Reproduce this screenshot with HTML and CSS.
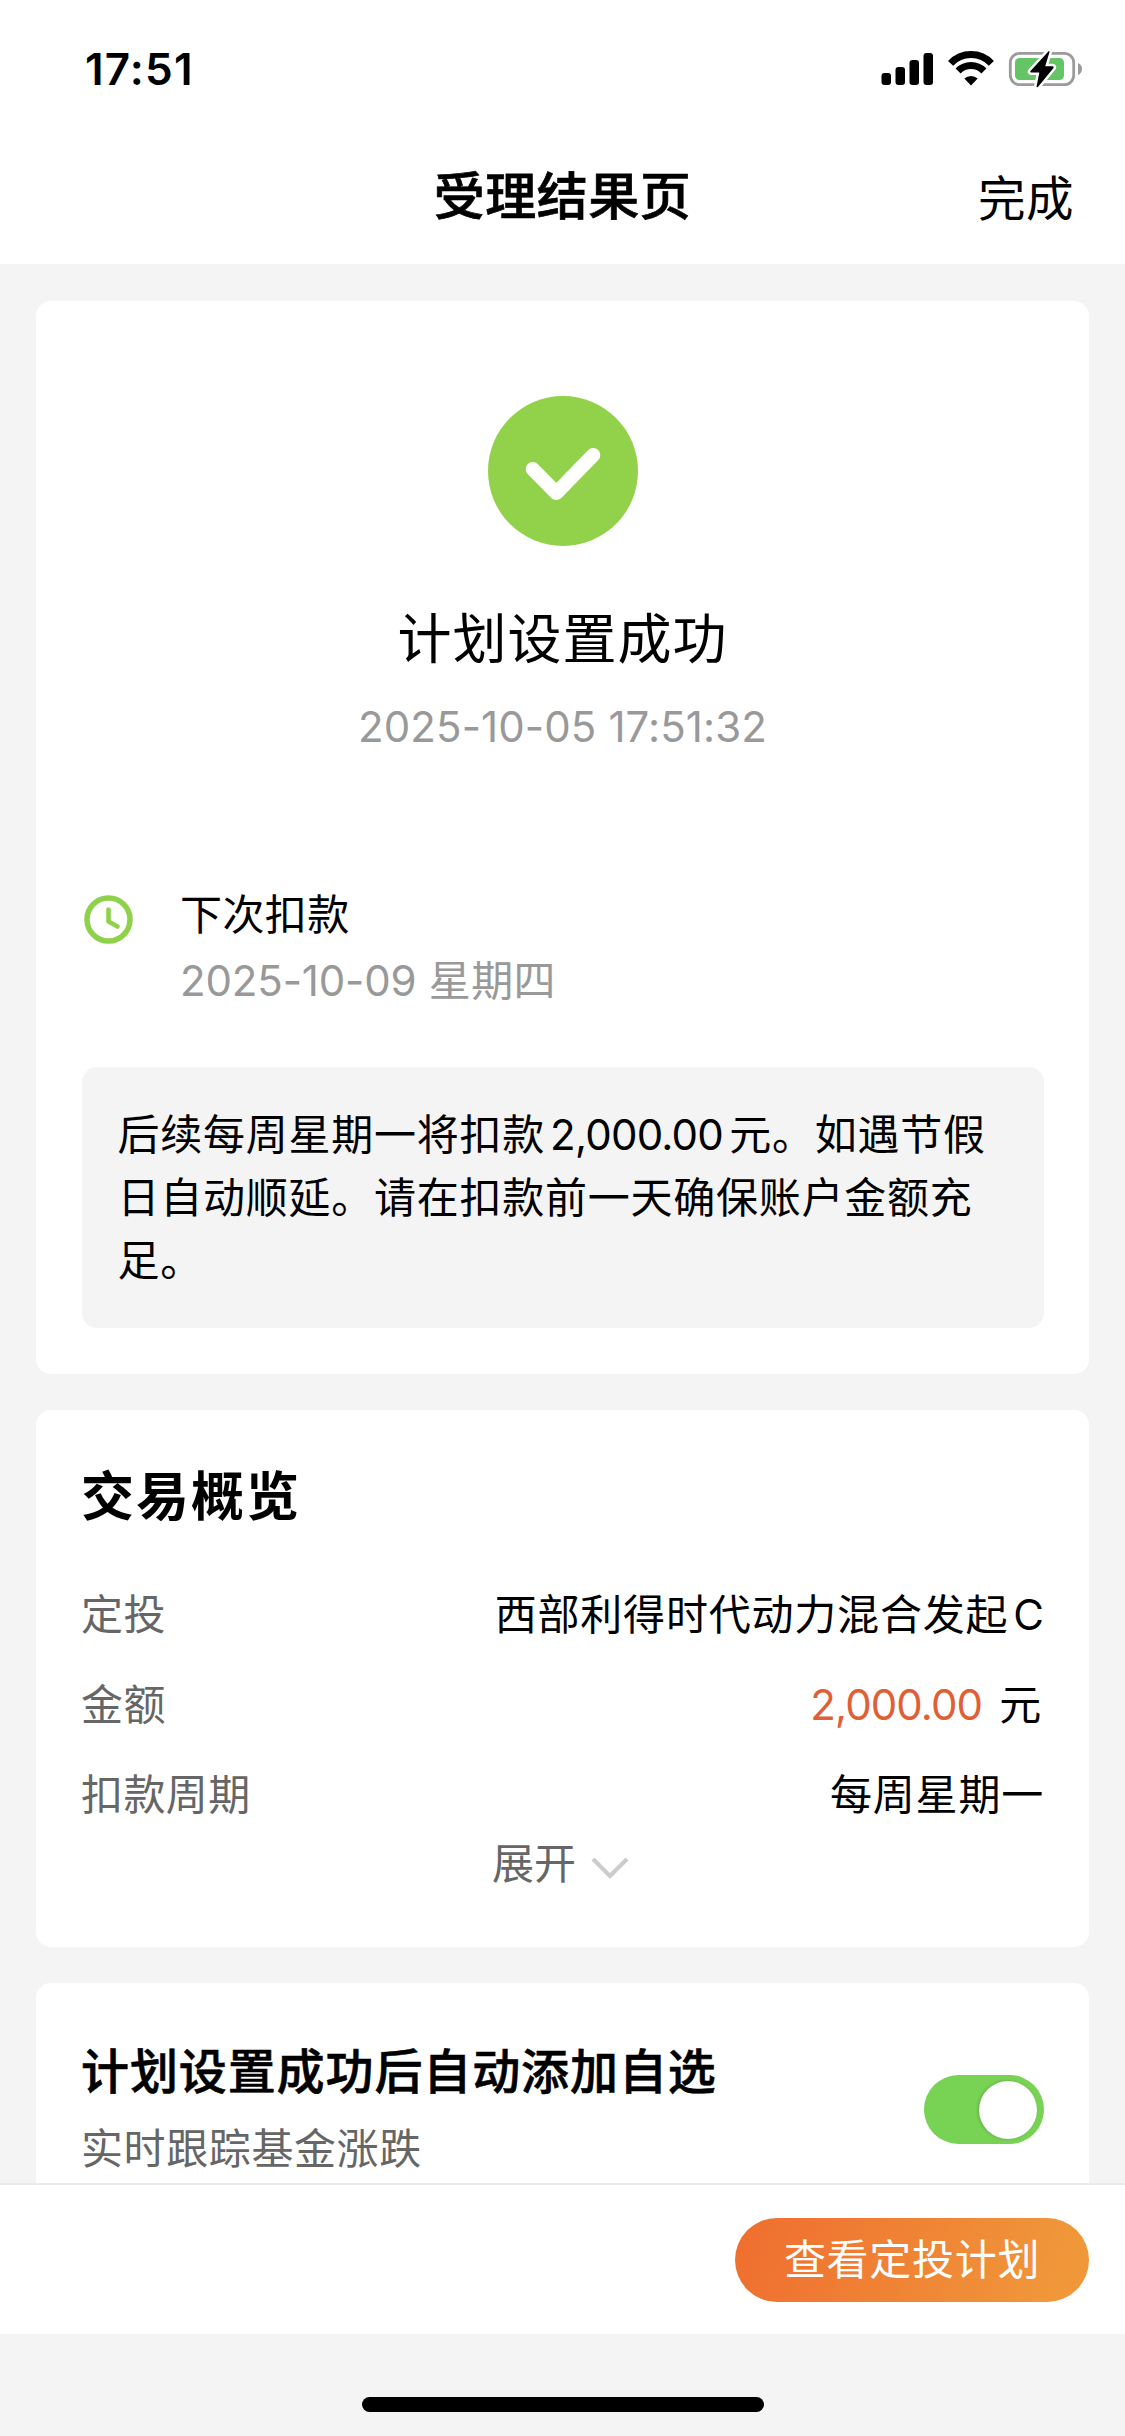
FILE: index.html
```html
<!DOCTYPE html>
<html lang="zh-CN">
<head>
<meta charset="utf-8">
<title>受理结果页</title>
<link rel="stylesheet" href="styles.css">
</head>
<body>
<div class="screen">
  <header class="top">
    <div class="status">
      <span class="time">17:51</span>
      <svg class="status-icons" width="204" height="40" viewBox="0 0 204 40">
        <g fill="#000">
          <rect x="1.5" y="23" width="9.5" height="12" rx="3"/>
          <rect x="15.5" y="17" width="9.5" height="18" rx="3"/>
          <rect x="29.5" y="10" width="9.5" height="25" rx="3"/>
          <rect x="43.5" y="3" width="9.5" height="32" rx="3"/>
        </g>
        <g fill="none" stroke="#000" stroke-width="7">
          <path d="M70.600 13.300A28 28 0 0 1 111.400 13.300"/>
          <path d="M78.100 21A18 18 0 0 1 103.900 21"/>
        </g>
        <path d="M91 35.500L84.300 28.500A10 10 0 0 1 97.700 28.500Z" fill="#000"/>
        <rect x="130.300" y="3.300" width="63.400" height="31.400" rx="9.500" fill="#fff" stroke="#9b9b9b" stroke-width="2.800"/>
        <rect x="135" y="8" width="49" height="22" rx="4.500" fill="#65c466"/>
        <path d="M198 13q4 1.800 4 6t-4 6z" fill="#9b9b9b"/>
        <path d="M168.600 1.300L150.500 20.900Q149.500 22.300 151.300 22.400H159.300L156.500 36.800Q157 37.900 158.300 36.400L173.500 18Q174.300 16.300 172.500 16.300H165.200L169.500 2Q169.500 .6 168.600 1.300Z" fill="#000" stroke="#fff" stroke-width="5" stroke-linejoin="round" paint-order="stroke"/>
      </svg>
    </div>
    <div class="nav">
      <h1 class="nav-title">受理结果页</h1>
      <span class="nav-done">完成</span>
    </div>
  </header>

  <main class="content">
    <section class="card result">
      <svg class="result-icon" width="150" height="150" viewBox="0 0 150 150">
        <circle cx="75" cy="75" r="75" fill="#92d24a"/>
        <path d="M44.700 73L68.300 97L105.300 59" fill="none" stroke="#fff" stroke-width="14" stroke-linecap="round" stroke-linejoin="round"/>
      </svg>
      <h2 class="result-title">计划设置成功</h2>
      <p class="result-time">2025-10-05 17:51:32</p>
      <div class="next">
        <svg class="next-icon" width="49" height="49" viewBox="0 0 49 49" fill="none" stroke="#8fd14b">
          <circle cx="24.500" cy="24.500" r="21.500" stroke-width="5.500"/>
          <path d="M24.500 14.500V26.500L33.500 31.500" stroke-width="4.600" stroke-linecap="round" stroke-linejoin="round"/>
        </svg>
        <div class="next-body">
          <p class="next-label">下次扣款</p>
          <p class="next-date"><span class="digits">2025-10-09</span> 星期四</p>
        </div>
      </div>
      <p class="notice">后续每周星期一将扣款<span class="notice-amount">2,000.00</span>元。如遇节假日自动顺延。请在扣款前一天确保账户金额充足。</p>
    </section>

    <section class="card overview">
      <h2 class="overview-title">交易概览</h2>
      <dl class="rows">
        <div class="row"><dt>定投</dt><dd>西部利得时代动力混合发起<span class="share">C</span></dd></div>
        <div class="row"><dt>金额</dt><dd class="sum"><span class="amount">2,000.00</span><span>元</span></dd></div>
        <div class="row"><dt>扣款周期</dt><dd>每周星期一</dd></div>
      </dl>
      <div class="expand">
        <span>展开</span>
        <svg width="38" height="22" viewBox="0 0 38 22"><path d="M2 2L19 19L36 2" fill="none" stroke="#ccc" stroke-width="4.200"/></svg>
      </div>
    </section>

    <section class="card auto">
      <div>
        <h2 class="auto-title">计划设置成功后自动添加自选</h2>
        <p class="auto-sub">实时跟踪基金涨跌</p>
      </div>
      <div class="toggle"><span class="knob"></span></div>
    </section>
  </main>

  <footer class="actions"><button class="view">查看定投计划</button></footer>
  <div class="home"><span class="home-bar"></span></div>
</div>
</body>
</html>
```
FILE: styles.css
```css
* { box-sizing: border-box; margin: 0; padding: 0; }

body {
  font-family: Inter, "Noto Sans CJK SC", sans-serif;
  font-size: 42px;
  color: #000;
  background: #f4f4f4;
}

svg { display: block; flex: none; }

.screen {
  width: 1125px;
  height: 2436px;
  display: flex;
  flex-direction: column;
  overflow: hidden;
}

/* status bar and title bar */
.top { height: 264px; background: #fff; flex: none; }
.status {
  height: 132px;
  padding: 0 41px 0 85px;
  display: flex;
  justify-content: space-between;
  align-items: flex-start;
}
.time { margin-top: 42px; font-size: 44px; line-height: 54px; font-weight: 600; letter-spacing: 1.2px; }
.status-icons { margin-top: 50px; }
.nav {
  height: 132px;
  padding: 0 51px;
  display: grid;
  grid-template-columns: 1fr auto 1fr;
  align-items: start;
}
.nav-title {
  grid-column: 2;
  margin-top: 35px;
  font-size: 51px;
  line-height: 60px;
  font-weight: 500;
  letter-spacing: .5px;
  -webkit-text-stroke: .7px #000;
}
.nav-done { justify-self: end; margin-top: 39px; font-size: 47.500px; line-height: 56px; letter-spacing: .5px; }

/* cards */
.content {
  flex: 1;
  min-height: 0;
  overflow: hidden;
  padding: 36.500px 36px 0;
  display: flex;
  flex-direction: column;
  gap: 36px;
}
.card { background: #fff; border-radius: 15px; padding: 0 45px; flex: none; }

.result {
  height: 1073px;
  padding-top: 95px;
  display: flex;
  flex-direction: column;
  align-items: center;
}
.result-title {
  margin-top: 62px;
  font-size: 54px;
  line-height: 64px;
  font-weight: 400;
  letter-spacing: 1px;
}
.result-time { margin-top: 30px; line-height: 50px; color: #999; letter-spacing: .1px; }
.next { align-self: stretch; display: flex; margin-top: 138.500px; padding-left: 3px; gap: 47px; }
.next-icon { margin-top: 5px; }
.next-label { line-height: 50px; letter-spacing: .4px; }
.next-date { margin-top: 16px; line-height: 50px; color: #999; letter-spacing: .4px; }
.digits { letter-spacing: -.15px; }
.notice {
  width: 962px;
  margin-top: 61px;
  padding: 36px 37px 36px 36px;
  border-radius: 15px;
  background: #f4f4f4;
  line-height: 63px;
  letter-spacing: .75px;
}
.notice-amount { margin: 0 6px 0 5px; letter-spacing: -.75px; }

.overview { height: 537px; }
.overview-title {
  padding-top: 55px;
  font-size: 53px;
  line-height: 64px;
  font-weight: 700;
  letter-spacing: 2px;
}
.rows { margin-top: 54px; }
.row { display: flex; justify-content: space-between; line-height: 64px; margin-bottom: 26px; letter-spacing: .4px; }
dt { color: #666; }
dd { letter-spacing: .8px; }
.share { margin-left: 5px; letter-spacing: 0; }
.sum { display: flex; gap: 17px; padding-right: 2px; }
.amount { color: #e06036; letter-spacing: -.9px; }
.expand {
  display: flex;
  justify-content: center;
  gap: 15px;
  margin-top: -21px;
  padding-right: 4px;
  line-height: 64px;
  color: #666;
}
.expand svg { margin-top: 25px; }

.auto { height: 260px; display: flex; justify-content: space-between; align-items: flex-start; }
.auto-title {
  margin-top: 59px;
  font-size: 48px;
  line-height: 60px;
  font-weight: 500;
  letter-spacing: .9px;
  -webkit-text-stroke: .6px #000;
}
.auto-sub { margin-top: 22px; line-height: 50px; color: #666; letter-spacing: .6px; }
.toggle {
  width: 120px;
  height: 69px;
  margin-top: 92px;
  padding: 6px 7px;
  border-radius: 35px;
  background: #78d254;
  display: flex;
  justify-content: flex-end;
}
.knob { width: 58px; height: 58px; border-radius: 50%; background: #fff; box-shadow: -1px 0 3px rgba(0, 0, 0, .2); }

/* bottom action bar */
.actions {
  height: 151px;
  flex: none;
  padding: 33px 36px 0;
  border-top: 2px solid #ebebeb;
  background: #fff;
  display: flex;
  justify-content: flex-end;
}
.view {
  width: 354px;
  height: 84px;
  border: 0;
  border-radius: 42px;
  background: linear-gradient(110deg, #ef6d2f, #f0973a 90%);
  color: #fff;
  font: 400 42px/84px Inter, "Noto Sans CJK SC", sans-serif;
  letter-spacing: .7px;
}
.home { height: 102px; flex: none; display: flex; justify-content: center; padding-top: 63px; }
.home-bar { width: 402px; height: 15px; border-radius: 8px; background: #000; }
```
